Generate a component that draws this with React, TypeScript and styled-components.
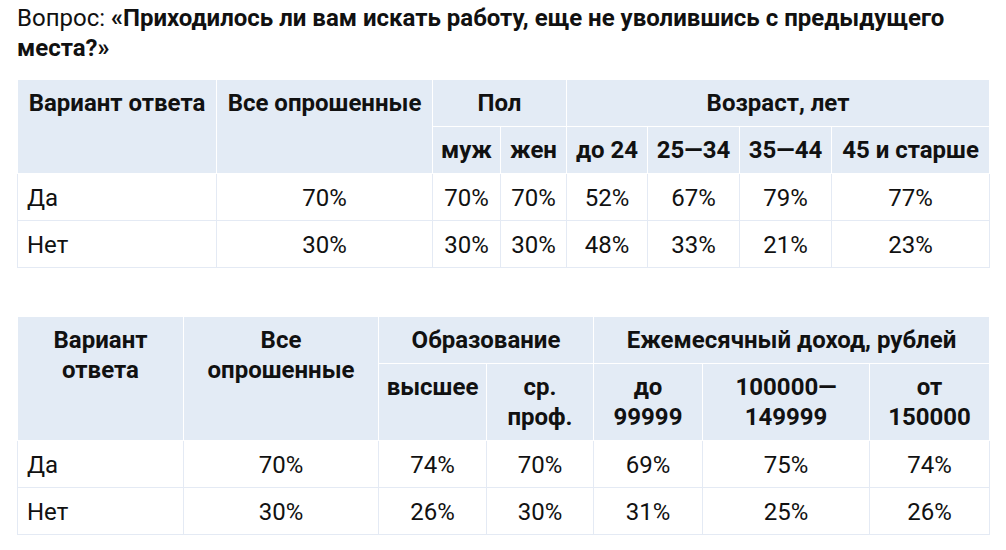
import React from 'react';
import styled, { createGlobalStyle } from 'styled-components';

const GlobalStyle = createGlobalStyle`
  html, body {
    margin: 0;
    padding: 0;
    background: #ffffff;
  }
  body {
    font-family: Roboto, "Noto Sans", Arial, sans-serif;
    color: #111111;
  }
`;

const Page = styled.div`
  padding: 3px 17px 0 17px;
  width: 972px;
`;

const Question = styled.p`
  margin: 0 0 16px 0;
  font-size: 24px;
  line-height: 30px;
  font-weight: 400;
`;

const Strong = styled.b`
  font-weight: 700;
`;

const Table = styled.table<{ $gap?: number }>`
  width: 972px;
  border-collapse: collapse;
  table-layout: fixed;
  font-size: 24px;
  line-height: 30px;
  margin-bottom: ${(p) => p.$gap ?? 0}px;
`;

const Col = styled.col<{ $w: number }>`
  width: ${(p) => p.$w}px;
`;

const HeadCell = styled.th`
  background: #e3ebf5;
  border: 1px solid #ffffff;
  padding: 8px 5px;
  font-weight: 700;
  text-align: center;
  vertical-align: top;
  color: #111111;
`;

const Cell = styled.td<{ $left?: boolean }>`
  border: 1px solid #e4eaf4;
  padding: 9px 9px 7px 9px;
  text-align: ${(p) => (p.$left ? 'left' : 'center')};
  vertical-align: top;
  color: #111111;
`;

type Group = { title: string; items: string[] };

type Survey = {
  widths: number[];
  groups: Group[];
  rows: { label: string; values: string[] }[];
};

const ageTable: Survey = {
  widths: [199, 216, 68, 66, 81, 92, 92, 158],
  groups: [
    { title: 'Пол', items: ['муж', 'жен'] },
    { title: 'Возраст, лет', items: ['до 24', '25—34', '35—44', '45 и старше'] },
  ],
  rows: [
    { label: 'Да', values: ['70%', '70%', '70%', '52%', '67%', '79%', '77%'] },
    { label: 'Нет', values: ['30%', '30%', '30%', '48%', '33%', '21%', '23%'] },
  ],
};

const incomeTable: Survey = {
  widths: [166, 195, 108, 107, 109, 167, 120],
  groups: [
    { title: 'Образование', items: ['высшее', 'ср. проф.'] },
    { title: 'Ежемесячный доход, рублей', items: ['до 99999', '100000—149999', 'от 150000'] },
  ],
  rows: [
    { label: 'Да', values: ['70%', '74%', '70%', '69%', '75%', '74%'] },
    { label: 'Нет', values: ['30%', '26%', '30%', '31%', '25%', '26%'] },
  ],
};

const SurveyTable: React.FC<{ data: Survey; gap?: number }> = ({ data, gap }) => (
  <Table $gap={gap}>
    <colgroup>
      {data.widths.map((w, i) => (
        <Col key={i} $w={w} />
      ))}
    </colgroup>
    <thead>
      <tr>
        <HeadCell rowSpan={2}>Вариант ответа</HeadCell>
        <HeadCell rowSpan={2}>Все опрошенные</HeadCell>
        {data.groups.map((g) => (
          <HeadCell key={g.title} colSpan={g.items.length}>
            {g.title}
          </HeadCell>
        ))}
      </tr>
      <tr>
        {data.groups.flatMap((g) => g.items).map((item) => (
          <HeadCell key={item}>{item}</HeadCell>
        ))}
      </tr>
    </thead>
    <tbody>
      {data.rows.map((row) => (
        <tr key={row.label}>
          <Cell $left>{row.label}</Cell>
          {row.values.map((v, i) => (
            <Cell key={i}>{v}</Cell>
          ))}
        </tr>
      ))}
    </tbody>
  </Table>
);

export default function App() {
  return (
    <Page>
      <GlobalStyle />
      <Question>
        Вопрос: <Strong>«Приходилось ли вам искать работу, еще не уволившись с предыдущего места?»</Strong>
      </Question>
      <SurveyTable data={ageTable} gap={48} />
      <SurveyTable data={incomeTable} />
    </Page>
  );
}
